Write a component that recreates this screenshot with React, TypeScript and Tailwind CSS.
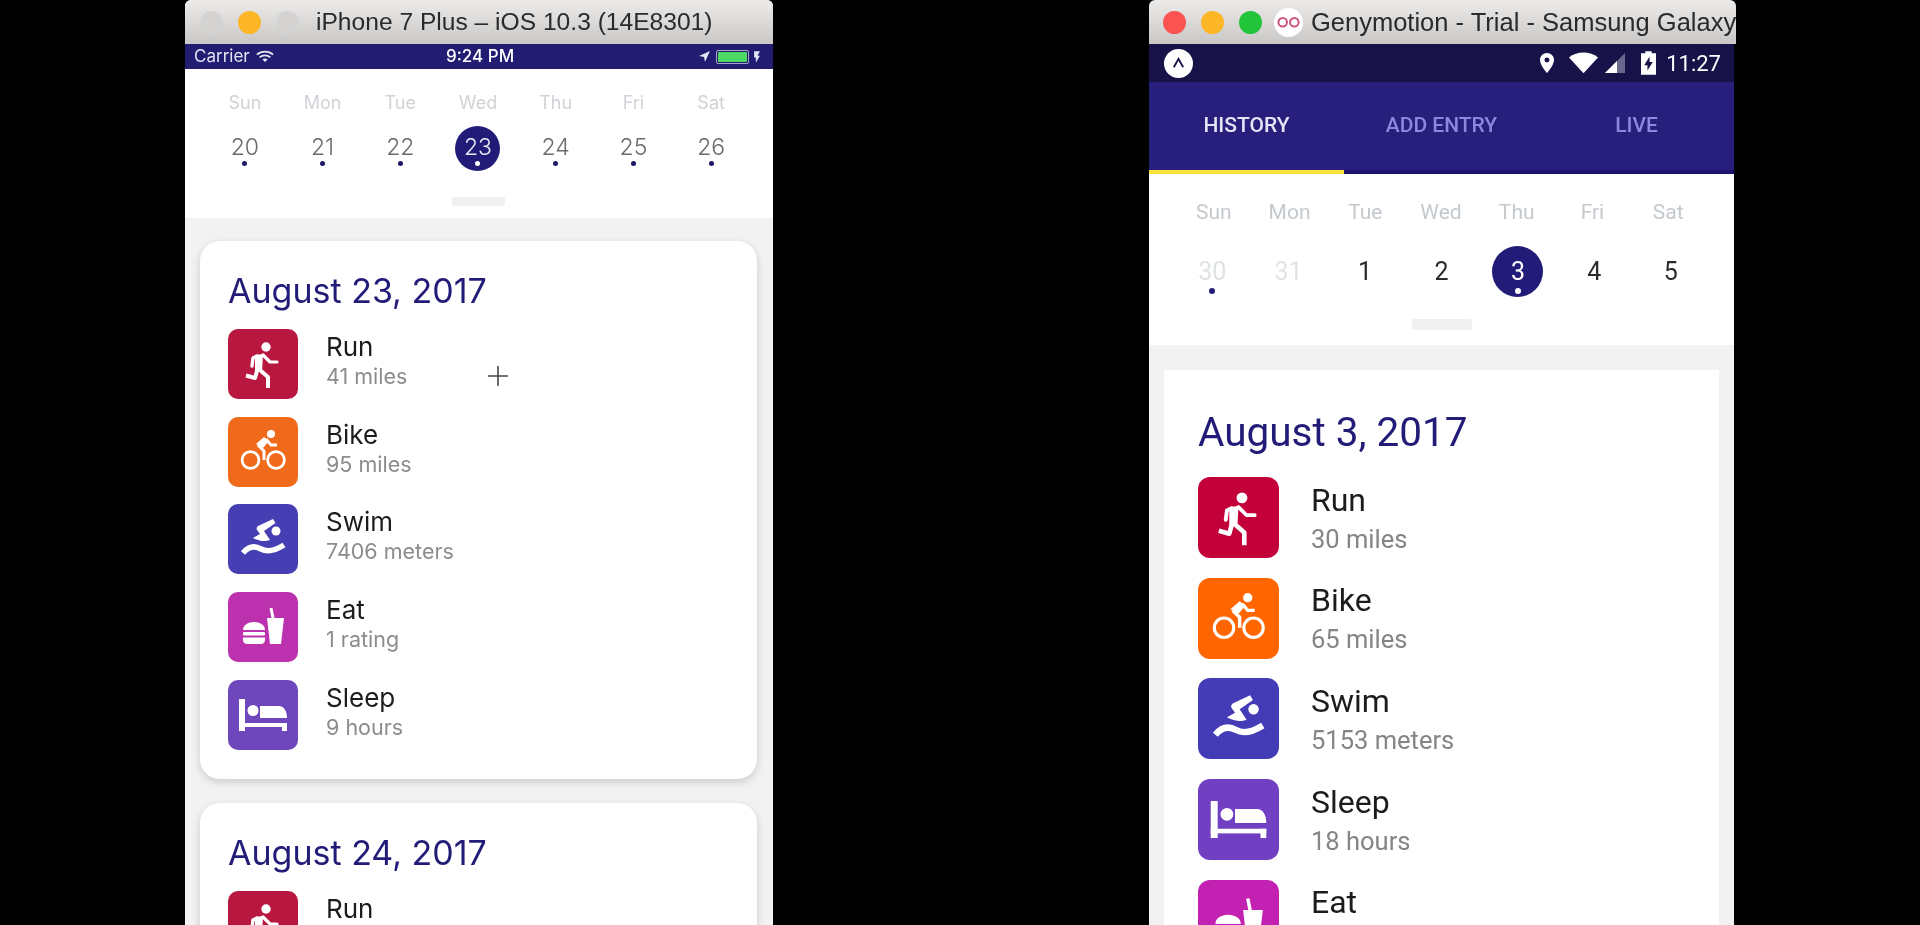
import { Plus } from 'lucide-react'
import { MdLocationOn, MdFlashOn } from 'react-icons/md'
import type { ComponentType } from 'react'

type IconProps = { className?: string }
type Entry = { name: string; sub: string; icon: ComponentType<IconProps>; tone: string }

// activity glyphs, all on a 70x70 grid so they scale with the tile
function RunIcon({ className }: IconProps) {
  return (
    <svg viewBox="0 0 70 70" className={className} fill="none" stroke="white" strokeLinecap="round" strokeLinejoin="round">
      <circle cx="38" cy="18" r="4.700" fill="white" stroke="none" />
      <path d="M27 26l8-1-1 18h-7z" fill="white" stroke="none" />
      <path d="M35 26l7 7h7" strokeWidth="3.200" />
      <path d="M29 27l-4 2-1 8" strokeWidth="3.400" />
      <path d="M29 42l-2 7-9-2.500" strokeWidth="4" strokeLinecap="butt" />
      <path d="M33 42l7 6v11" strokeWidth="4" strokeLinecap="butt" />
    </svg>
  )
}

function BikeIcon({ className }: IconProps) {
  return (
    <svg viewBox="0 0 70 70" className={className} fill="none" stroke="white" strokeLinejoin="round">
      <circle cx="22.500" cy="43" r="8.400" strokeWidth="2.700" />
      <circle cx="48" cy="43" r="8.400" strokeWidth="2.700" />
      <circle cx="43" cy="17" r="4" fill="white" stroke="none" />
      <path d="M28 27l8-7 5 4-6 7z" fill="white" stroke="none" />
      <path d="M38 22l5 6h6" strokeWidth="2.800" />
      <path d="M30 28l6 6v9" strokeWidth="3" />
    </svg>
  )
}

function SwimIcon({ className }: IconProps) {
  return (
    <svg viewBox="0 0 70 70" className={className} fill="none">
      <circle cx="48" cy="27" r="4.500" fill="white" />
      <path d="M45 15l2.500 4L36 27l6 9c-5 2-10 1-15-1l-2-1 7-4-3-4c-1-2 0-3 1-4z" fill="white" />
      <path d="M15 49c5-6 11-8 18-4s15 1 23-4" stroke="white" strokeWidth="5.500" />
    </svg>
  )
}

function EatIcon({ className }: IconProps) {
  return (
    <svg viewBox="0 0 70 70" className={className} fill="white">
      <path d="M15 38c0-5 5-8 11-8s11 3 11 8z" />
      <rect x="15" y="40" width="22" height="3.500" rx="1" />
      <path d="M15 45.500h22V48c0 2.500-2 4-4 4H19c-2 0-4-1.500-4-4z" />
      <path d="M39 26h17l-3 26H42z" />
      <path d="M43 16l2 10" stroke="white" strokeWidth="3" />
    </svg>
  )
}

function SleepIcon({ className }: IconProps) {
  return (
    <svg viewBox="0 0 70 70" className={className} fill="white">
      <rect x="11" y="19" width="6" height="32" />
      <rect x="11" y="43" width="48" height="4" />
      <rect x="54" y="43" width="5" height="8" />
      <circle cx="25" cy="30.500" r="5.500" />
      <path d="M32 26h19c5 0 8 5 8 12H32z" />
    </svg>
  )
}

const leftEntries: Entry[] = [
  { name: 'Run', sub: '41 miles', icon: RunIcon, tone: 'bg-[#b8173f]' },
  { name: 'Bike', sub: '95 miles', icon: BikeIcon, tone: 'bg-[#f06a1c]' },
  { name: 'Swim', sub: '7406 meters', icon: SwimIcon, tone: 'bg-[#463fb4]' },
  { name: 'Eat', sub: '1 rating', icon: EatIcon, tone: 'bg-[#bb31ae]' },
  { name: 'Sleep', sub: '9 hours', icon: SleepIcon, tone: 'bg-[#6e47bd]' },
]

const rightEntries: Entry[] = [
  { name: 'Run', sub: '30 miles', icon: RunIcon, tone: 'bg-[#c4003a]' },
  { name: 'Bike', sub: '65 miles', icon: BikeIcon, tone: 'bg-[#ff6600]' },
  { name: 'Swim', sub: '5153 meters', icon: SwimIcon, tone: 'bg-[#433cb6]' },
  { name: 'Sleep', sub: '18 hours', icon: SleepIcon, tone: 'bg-[#7140c2]' },
  { name: 'Eat', sub: '', icon: EatIcon, tone: 'bg-[#c221b2]' },
]

const weekDays = ['Sun', 'Mon', 'Tue', 'Wed', 'Thu', 'Fri', 'Sat']

function Lights({ active }: { active: boolean }) {
  return (
    <div className="flex items-center gap-[15px]">
      <span className={`size-[23px] rounded-full ${active ? 'bg-[#fb5252]' : 'bg-[#d4d3d2]'}`} />
      <span className="size-[23px] rounded-full bg-[#fdb626]" />
      <span className={`size-[23px] rounded-full ${active ? 'bg-[#22c43a]' : 'bg-[#d4d3d2]'}`} />
    </div>
  )
}

function IosRow({ e, hideSub }: { e: Entry; hideSub?: boolean }) {
  const Icon = e.icon
  return (
    <div className="flex h-[70px] items-center gap-[28px]">
      <div className={`flex size-[70px] shrink-0 items-center justify-center rounded-[10px] ${e.tone}`}>
        <Icon className="size-full" />
      </div>
      <div className="flex flex-col pb-[6px]">
        <span className="text-[26px] leading-[31px] text-[#1c1c1c]">{e.name}</span>
        <span className="min-h-[29px] text-[21.500px] leading-[29px] text-[#8c8c8c]">{hideSub ? '' : e.sub}</span>
      </div>
    </div>
  )
}

function AndroidRow({ e }: { e: Entry }) {
  const Icon = e.icon
  return (
    <div className="flex h-[81px] items-center gap-[32px]">
      <div className={`flex size-[81px] shrink-0 items-center justify-center rounded-[12px] ${e.tone}`}>
        <Icon className="size-full" />
      </div>
      <div className="flex flex-col gap-[6px]">
        <span className="text-[32px] leading-[36px] text-[#1c1c1c]">{e.name}</span>
        <span className="min-h-[30px] text-[25.500px] leading-[30px] text-[#858585]">{e.sub}</span>
      </div>
    </div>
  )
}

function IphoneWindow() {
  const dates = [20, 21, 22, 23, 24, 25, 26]
  return (
    <div className="flex h-[925px] w-[588px] shrink-0 flex-col overflow-hidden rounded-t-[6px] bg-[#f2f2f2] font-['Inter',sans-serif]">
      <div className="flex h-[44px] shrink-0 items-center gap-[17px] bg-gradient-to-b from-[#ecebea] to-[#c9c8c7] pl-[15px] font-['Liberation_Sans',sans-serif]">
        <Lights active={false} />
        <span className="text-[24.600px] whitespace-nowrap text-[#2a2a2a]">iPhone 7 Plus – iOS 10.3 (14E8301)</span>
      </div>

      <div className="relative flex h-[25px] shrink-0 items-center justify-between bg-[#221c72] px-[9px] text-[#e4e4f2]">
        <div className="flex items-center gap-[6px] text-[17px]">
          Carrier
          <svg viewBox="0 0 20 14" className="h-[13px] w-[18px]" fill="none" stroke="currentColor" strokeWidth="2">
            <path d="M1 5c5-4.500 13-4.500 18 0M4 8c3.500-3 8.500-3 12 0" />
            <path d="M10 13l-3-3c1.800-1.200 4.200-1.200 6 0z" fill="currentColor" stroke="none" />
          </svg>
        </div>
        <span className="absolute left-[261px] text-[17px] font-medium text-white">9:24 PM</span>
        <div className="flex items-center gap-[6px]">
          <svg viewBox="0 0 12 12" className="size-[11px]" fill="currentColor">
            <path d="M12 0L0 5.500l5.500 1L6.500 12z" />
          </svg>
          <span className="flex h-[14px] w-[33px] items-center rounded-[2px] border border-white/60 p-px">
            <span className="h-full w-full rounded-[1px] bg-[#4cd964]" />
          </span>
          <MdFlashOn className="-ml-[5px] size-[14px]" />
        </div>
      </div>

      <div className="relative flex h-[149px] shrink-0 flex-col bg-white pt-[24px] pr-[23px] pl-[21px]">
        <div className="grid grid-cols-7 text-center text-[18px] leading-[20px] text-[#cfd2d6]">
          {weekDays.map((d) => (
            <span key={d}>{d}</span>
          ))}
        </div>
        <div className="mt-[13px] grid grid-cols-7">
          {dates.map((d) => (
            <div key={d} className="flex justify-center">
              <div
                className={`relative flex size-[45px] items-center justify-center rounded-full text-[23px] font-light ${
                  d === 23 ? 'bg-[#221c78] text-[#e8e8f5]' : 'text-[#6b6b6b]'
                }`}
              >
                <span className="-mt-[3px]">{d}</span>
                <span
                  className={`absolute bottom-[5px] size-[5px] rounded-full ${d === 23 ? 'bg-white' : 'bg-[#1c1766]'}`}
                />
              </div>
            </div>
          ))}
        </div>
        <div className="mx-auto mt-[26px] h-[9px] w-[53px] rounded-[2px] bg-[#f0f0f0]" />
      </div>

      <div className="mr-[16px] ml-[15px] mt-[23px] h-[538px] shrink-0 rounded-[20px] bg-white px-[28px] pt-[30px] shadow-[0_3px_8px_rgba(0,0,0,0.16)]">
        <div className="text-[34px] leading-[40px] text-[#221c78]">August 23, 2017</div>
        <div className="mt-[18px] flex flex-col gap-[17.700px]">
          {leftEntries.map((e) => (
            <IosRow key={e.name} e={e} />
          ))}
        </div>
      </div>

      <div className="mr-[16px] ml-[15px] mt-[24px] h-[300px] shrink-0 rounded-[20px] bg-white px-[28px] pt-[30px] shadow-[0_3px_8px_rgba(0,0,0,0.16)]">
        <div className="text-[34px] leading-[40px] text-[#221c78]">August 24, 2017</div>
        <div className="mt-[18px]">
          <IosRow e={leftEntries[0]} hideSub />
        </div>
      </div>
    </div>
  )
}

function GenymotionWindow() {
  const dates = [
    { d: 30, dim: true, dot: true },
    { d: 31, dim: true },
    { d: 1 },
    { d: 2 },
    { d: 3, on: true, dot: true },
    { d: 4 },
    { d: 5 },
  ] as { d: number; dim?: boolean; on?: boolean; dot?: boolean }[]

  return (
    <div className="flex h-[925px] w-[587px] shrink-0 flex-col overflow-hidden rounded-t-[6px] font-['Roboto',sans-serif]">
      <div className="flex h-[44px] shrink-0 items-center overflow-hidden bg-gradient-to-b from-[#ecebea] to-[#c9c8c7] pl-[14px] font-['Liberation_Sans',sans-serif]">
        <Lights active />
        <span className="ml-[12px] flex size-[29px] shrink-0 items-center justify-center rounded-full bg-white">
          <svg viewBox="0 0 28 14" className="w-[25px]" fill="none" stroke="#d0567f" strokeWidth="2.300">
            <circle cx="7.500" cy="7" r="4.800" />
            <circle cx="20.500" cy="7" r="4.800" />
          </svg>
        </span>
        <span className="ml-[8px] text-[25.500px] whitespace-nowrap text-[#2a2a2a]">Genymotion - Trial - Samsung Galaxy</span>
      </div>

      <div className="mr-[2px] flex min-h-0 flex-1 flex-col bg-[#f2f2f2]">
        <div className="flex h-[38px] shrink-0 items-center justify-between bg-[#171349] pr-[13px] pl-[15px] text-white">
          <span className="flex size-[29px] items-center justify-center rounded-full bg-white">
            <svg viewBox="0 0 14 12" className="w-[13px]" fill="none" stroke="#171349" strokeWidth="2">
              <path d="M2 11l5-9 5 9" />
            </svg>
          </span>
          <div className="flex items-center gap-[7px]">
            <MdLocationOn className="size-[24px]" />
            <svg viewBox="0 0 48 34" className="ml-[3px] h-[24px] w-[29px]" fill="currentColor">
              <path d="M0 8c13-11 35-11 48 0L24 34z" />
            </svg>
            <svg viewBox="0 0 20 20" className="size-[20px]">
              <path d="M0 20L20 0v20z" fill="#6a678f" />
              <path d="M0 20L12 8v12z" fill="white" />
            </svg>
            <svg viewBox="0 0 14 22" className="ml-[9px] h-[24px] w-[15px]">
              <path d="M4 0h6v2h4v20H0V2h4z" fill="white" />
              <path d="M8 5L3 13h3v5l5-8H8z" fill="#171349" />
            </svg>
            <span className="ml-[3px] text-[22px]">11:27</span>
          </div>
        </div>

        <div className="flex h-[88px] shrink-0 bg-[#271f7b] text-[21px] font-medium text-[#8c88de]">
          <div className="flex w-[195px] items-center justify-center text-[#e6e5f7]">HISTORY</div>
          <div className="flex w-[195px] items-center justify-center">ADD ENTRY</div>
          <div className="flex w-[195px] items-center justify-center">LIVE</div>
        </div>
        <div className="flex h-[4px] shrink-0 bg-[#1b1570]">
          <div className="h-full w-[195px] bg-[#f7e33b]" />
        </div>

        <div className="flex h-[171px] shrink-0 flex-col bg-white px-[25px] pt-[26px]">
          <div className="grid grid-cols-7 pr-[3px] pl-[2px] text-center text-[21px] leading-[24px] text-[#c4c9ce]">
            {weekDays.map((d) => (
              <span key={d}>{d}</span>
            ))}
          </div>
          <div className="mt-[22px] grid grid-cols-7">
            {dates.map((x) => (
              <div key={x.d} className="flex justify-center">
                <div
                  className={`relative flex size-[51px] items-center justify-center rounded-full text-[25px] ${
                    x.on ? 'bg-[#221c78] text-white' : x.dim ? 'text-[#dfe3e4]' : 'text-[#2b2b2b]'
                  }`}
                >
                  {x.d}
                  {x.dot && (
                    <span className={`absolute bottom-[3px] size-[6px] rounded-full ${x.on ? 'bg-white' : 'bg-[#221c78]'}`} />
                  )}
                </div>
              </div>
            ))}
          </div>
          <div className="mx-auto mt-[22px] h-[11px] w-[60px] rounded-[2px] bg-[#f0f0f0]" />
        </div>

        <div className="mx-[15px] mt-[25px] flex-1 bg-white px-[34px] pt-[40px]">
          <div className="text-[40.500px] leading-[44px] text-[#221c78]">August 3, 2017</div>
          <div className="mt-[23px] flex flex-col gap-[19.700px]">
            {rightEntries.map((e) => (
              <AndroidRow key={e.name} e={e} />
            ))}
          </div>
        </div>
      </div>
    </div>
  )
}

export default function App() {
  return (
    <div className="relative flex h-[925px] w-full overflow-hidden bg-black pl-[185px] blur-[0.5px]">
      <IphoneWindow />
      <div className="w-[376px] shrink-0" />
      <GenymotionWindow />
      <Plus className="absolute top-[360px] left-[482px] size-[32px] text-[#444]" strokeWidth={1.2} />
    </div>
  )
}
